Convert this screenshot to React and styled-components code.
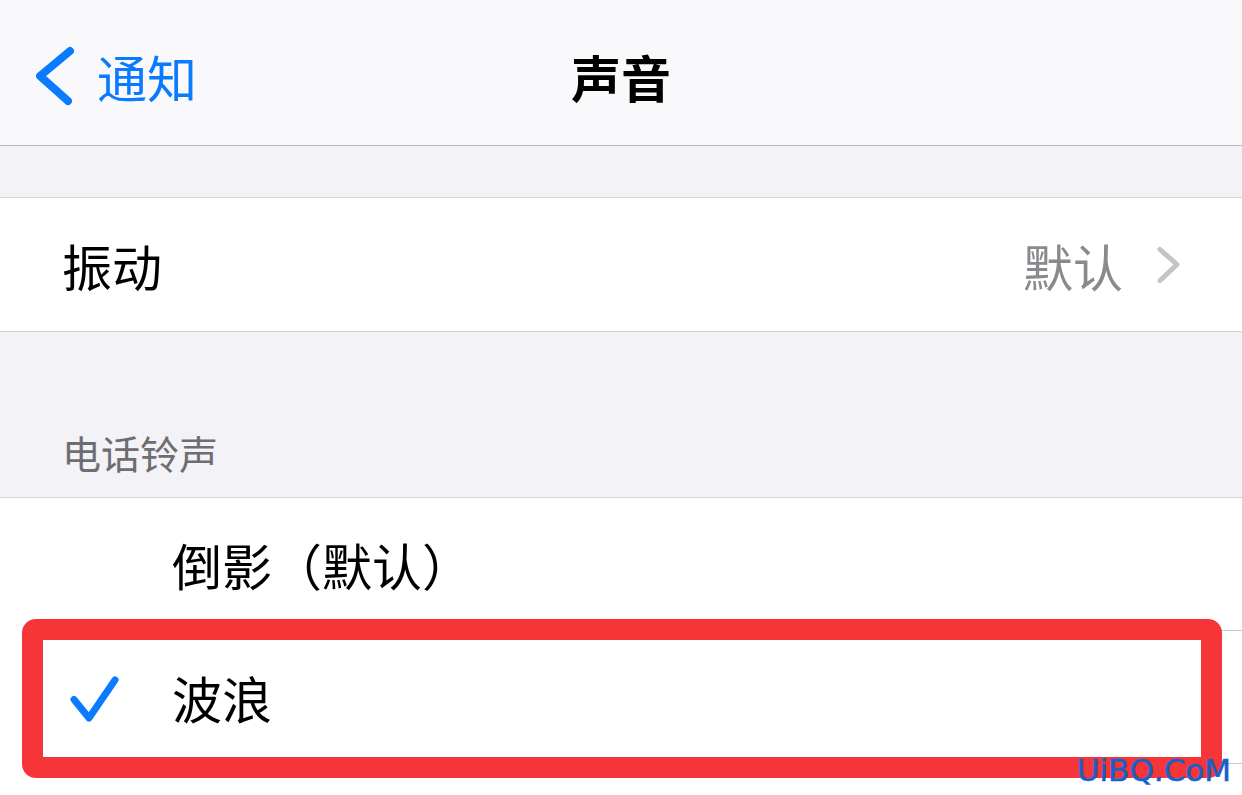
import React from 'react';
import styled, { createGlobalStyle } from 'styled-components';

const GlobalStyle = createGlobalStyle`
  html, body {
    margin: 0;
    padding: 0;
    width: 1242px;
    height: 795px;
    overflow: hidden;
    background: #f2f2f7;
  }
  * { box-sizing: border-box; }
`;

const Page = styled.div`
  position: relative;
  width: 1242px;
  height: 795px;
  overflow: hidden;
  background: #f2f2f7;
  font-family: "Noto Sans CJK SC", "Noto Sans", sans-serif;
`;

const NavBar = styled.div`
  display: grid;
  grid-template-columns: 1fr auto 1fr;
  align-items: center;
  height: 146px;
  padding-top: 6px;
  background: #f9f9fb;
  border-bottom: 1px solid #b7b7bb;
`;

const BackButton = styled.div`
  display: flex;
  align-items: center;
  gap: 21px;
  padding-left: 36px;
  color: #0a7aff;
  font-size: 50px;
  line-height: 1;
`;

const Title = styled.div`
  font-size: 50px;
  font-weight: 700;
  line-height: 1;
  color: #000;
`;

const Spacer = styled.div`
  height: ${p => p.h}px;
`;

const Group = styled.div`
  background: #fff;
  border-top: 1px solid #d3d3d8;
  border-bottom: 1px solid #d3d3d8;
`;

const Row = styled.div`
  position: relative;
  display: flex;
  align-items: stretch;
  height: ${p => p.h || 133}px;
`;

const CheckCell = styled.div`
  width: 172px;
  flex: none;
  display: flex;
  align-items: center;
  padding-left: 70px;
`;

const Content = styled.div`
  flex: 1;
  display: flex;
  align-items: center;
  justify-content: space-between;
  padding-left: ${p => p.inset || 0}px;
  padding-right: 61px;
  border-bottom: ${p => (p.last ? 'none' : '1px solid #c9c9ce')};
`;

const Label = styled.div`
  font-size: 50px;
  line-height: 1;
  color: #000;
`;

const Detail = styled.div`
  display: flex;
  align-items: center;
  gap: 34px;
  font-size: 50px;
  line-height: 1;
  color: #8a8a8e;
`;

const SectionHeader = styled.div`
  height: 165px;
  display: flex;
  align-items: flex-end;
  padding: 0 0 21px 62px;
  font-size: 39px;
  line-height: 48px;
  color: #6d6d72;
`;

const Highlight = styled.div`
  position: absolute;
  top: -12px;
  left: 22px;
  right: 20px;
  bottom: -14px;
  border: 21px solid #f63538;
  border-radius: 14px;
  pointer-events: none;
`;

const Watermark = styled.div`
  position: absolute;
  top: 755px;
  right: 11px;
  font-family: "DejaVu Sans", sans-serif;
  font-size: 31px;
  line-height: 1;
  color: #1a60c6;
  -webkit-text-stroke: 0.6px #1a60c6;
`;

const BackChevron = () => (
  <svg width="40" height="60" viewBox="0 0 40 60">
    <polyline points="34,5 4,30 32,55" fill="none" stroke="#0a7aff" strokeWidth="8" strokeLinecap="round" strokeLinejoin="round" />
  </svg>
);

const Disclosure = () => (
  <svg width="24" height="40" viewBox="0 0 24 40">
    <polyline points="3,4.5 20,19.5 3,35.5" fill="none" stroke="#c4c4c8" strokeWidth="5" strokeLinecap="round" strokeLinejoin="round" />
  </svg>
);

const Check = () => (
  <svg width="50" height="50" viewBox="0 0 50 50">
    <polyline points="4,26.5 19,45 45,7" fill="none" stroke="#0a7aff" strokeWidth="7" strokeLinecap="round" strokeLinejoin="round" />
  </svg>
);

const tones = [
  { name: '倒影（默认）', selected: false },
  { name: '波浪', selected: true },
  { name: '', selected: false },
];

export default function App() {
  return (
    <Page>
      <GlobalStyle />
      <NavBar>
        <BackButton>
          <BackChevron />
          通知
        </BackButton>
        <Title>声音</Title>
        <div />
      </NavBar>

      <Spacer h={51} />

      <Group>
        <Row>
          <Content inset={62} last>
            <Label>振动</Label>
            <Detail>
              默认
              <Disclosure />
            </Detail>
          </Content>
        </Row>
      </Group>

      <SectionHeader>电话铃声</SectionHeader>

      <Group>
        {tones.map((t, i) => (
          <Row key={i}>
            <CheckCell>{t.selected && <Check />}</CheckCell>
            <Content last={i === tones.length - 1}>
              <Label>{t.name}</Label>
            </Content>
            {t.selected && <Highlight />}
          </Row>
        ))}
      </Group>

      <Watermark>UiBQ.CoM</Watermark>
    </Page>
  );
}
